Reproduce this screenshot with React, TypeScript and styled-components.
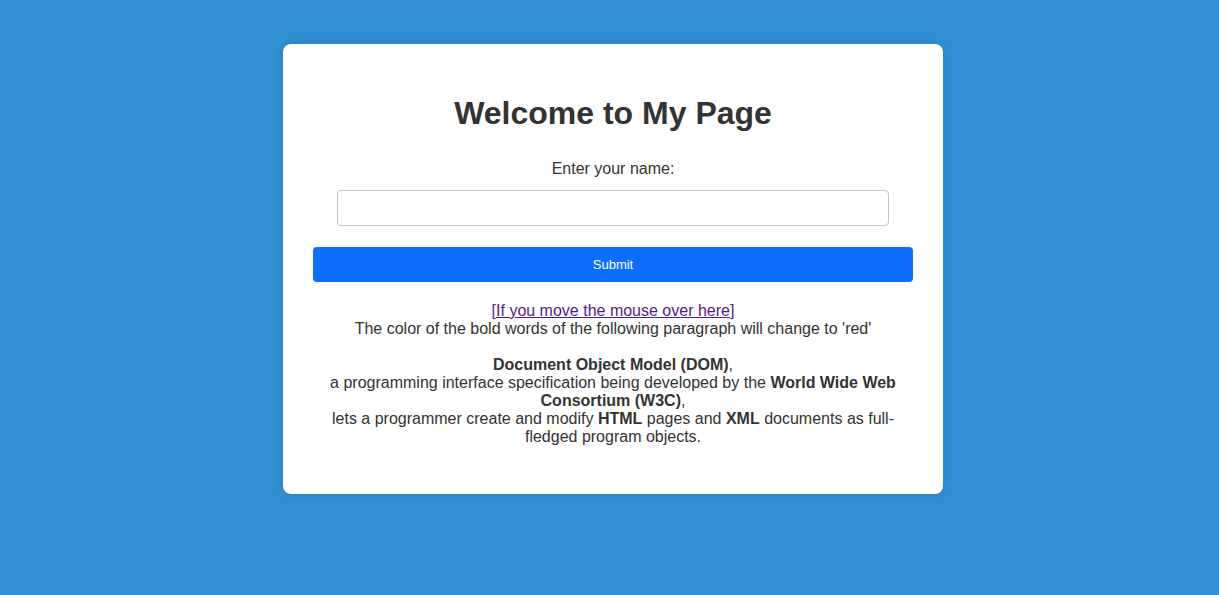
import React from "react";
import styled, { createGlobalStyle } from "styled-components";

const Global = createGlobalStyle`
  html, body {
    margin: 0;
    padding: 0;
    background: #3190d4;
    font-family: "Liberation Sans", Arial, sans-serif;
    color: #333;
  }
  body { min-height: 595px; }
`;

const Page = styled.div`
  padding: 44px 0 0 7px;
`;

const Card = styled.div`
  width: 600px;
  margin: 0 auto;
  padding: 30px;
  background: #ffffff;
  border-radius: 8px;
  box-shadow: 0 0 12px rgba(0, 0, 0, 0.12);
  text-align: center;
`;

const Title = styled.h1`
  font-size: 32px;
  font-weight: bold;
  line-height: 37px;
  margin: 21px 0 21px;
  color: #333;
`;

const Form = styled.form`
  display: flex;
  flex-direction: column;
  align-items: center;
  margin: 0;
`;

const Label = styled.label`
  display: block;
  font-size: 16px;
  line-height: normal;
  margin: 7px 0 12px;
  color: #333;
`;

const Input = styled.input`
  box-sizing: border-box;
  width: 552px;
  height: 36px;
  padding: 8px 10px;
  border: 1px solid #c4c4c4;
  border-radius: 4px;
  font-family: inherit;
  font-size: 16px;
  background: #fff;
  outline: none;
`;

const Button = styled.button`
  box-sizing: border-box;
  width: 100%;
  height: 35px;
  margin-top: 21px;
  border: none;
  border-radius: 4px;
  background: #0d6efd;
  color: #fff;
  font-family: inherit;
  font-size: 13px;
  cursor: pointer;
`;

const Text = styled.div`
  margin: 20px 0 18px;
  font-size: 16px;
  line-height: normal;
  color: #333;
`;

const HoverLink = styled.a`
  color: #551a8b;
  text-decoration: underline;
`;

export default function App() {
  return (
    <>
      <Global />
      <Page>
        <Card>
          <Title>Welcome to My Page</Title>
          <Form onSubmit={(e) => e.preventDefault()}>
            <Label htmlFor="name">Enter your name:</Label>
            <Input id="name" type="text" />
            <Button type="submit">Submit</Button>
          </Form>
          <Text>
            <HoverLink href="#">[If you move the mouse over here]</HoverLink>
            <br />
            The color of the bold words of the following paragraph will change to 'red'
            <br />
            <br />
            <b>Document Object Model (DOM)</b>,<br />
            a programming interface specification being developed by the{" "}
            <b>World Wide Web Consortium (W3C)</b>,<br />
            lets a programmer create and modify <b>HTML</b> pages and <b>XML</b> documents as
            full-fledged program objects.
          </Text>
        </Card>
      </Page>
    </>
  );
}
